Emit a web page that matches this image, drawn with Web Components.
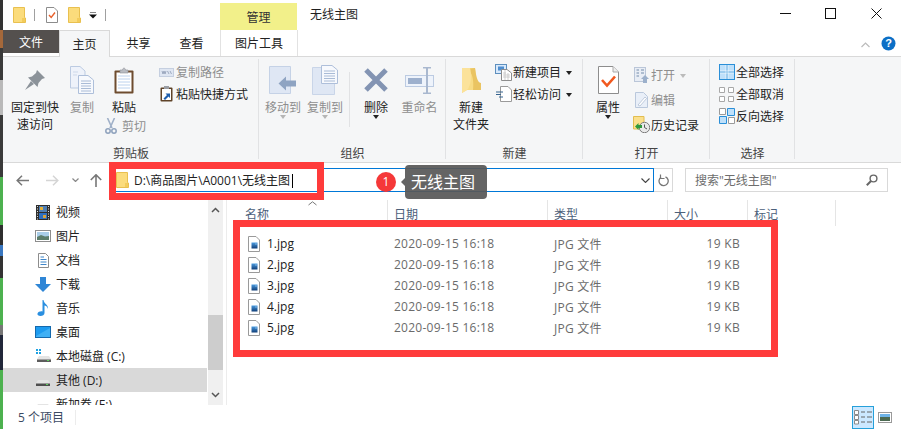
<!DOCTYPE html>
<html lang="zh">
<head>
<meta charset="utf-8">
<title>无线主图</title>
<style>
  html, body { margin: 0; height: 429px; overflow: hidden; background: #fff; }
  body { font: 12px "Open Sans", "Noto Sans CJK SC", sans-serif; color: #1f1f1f; display: flex; position: relative; }
  .strip { width: 3px; flex: none; background: linear-gradient(#333 0 30px, #a5683a 30px 48px, #3a3a3a 48px 80px, #b9b9b9 80px 115px, #3a3a3a 115px 177px, #4db14f 177px 225px, #2f2f2f 225px 245px, #3a77c0 245px 256px, #333 256px 278px, #4db14f 278px 325px, #777 325px 335px, #22283a 335px 370px, #4db14f 370px); }
  #frame1 { left: 109px; top: 162px; width: 215px; height: 38px; }
  #frame2 { left: 233px; top: 220px; width: 545px; height: 137px; }
</style>
</head>
<body>
<div class="strip"></div>
<file-window></file-window>
<red-frame id="frame1"></red-frame>
<red-frame id="frame2"></red-frame>
<step-tip step="1">无线主图</step-tip>

<script>
// all icons in one place, drawn at the size they have on screen
const ICONS = {
  folder: [13, 16, `<path d="M.5 .5H11.5V10.5L12.5 11V15.5H.5Z" fill="#fbdc7c" stroke="#e9c04f"/><path d="M9 11H12V15H9Z" fill="#f3cc5b"/>`],
  qatdoc: [12, 16, `<path d="M.5 .5H8L11.5 4V15.5H.5Z" fill="#fff" stroke="#8c8c8c"/><path d="M3 8L5.2 10.5L9 5.5" fill="none" stroke="#e8612c" stroke-width="1.4"/>`],
  qatdrop: [8, 7, `<path d="M1 0H7" stroke="#111"/><path d="M0 2.5H8L4 6.5Z" fill="#111"/>`],
  pin: [20, 20, `<path d="M12 0L20 8 17 9 13.5 13 12.5 17 3 7.5 7 6.5 11 3Z" fill="#8b9299"/><path d="M6 11L0 20 9 14Z" fill="#8b9299"/>`],
  copy: [24, 28, `<path d="M.5 .5H10L15 5V22H.5Z" fill="#eef2fa" stroke="#bccbe2"/><path d="M8.5 9.5H18L23.5 14V27.5H8.5Z" fill="#f7f9fd" stroke="#aebfda"/><path d="M11 15H21M11 17.5H21M11 20H21M11 22.5H21M11 25H21" stroke="#a9bbd6"/><path d="M3 6H8M3 9H7" stroke="#cdd8ea"/>`],
  paste: [20, 27, `<rect x=".5" y="3.5" width="19" height="23" rx="1" fill="#6e4c2f"/><rect x="2.5" y="5.5" width="15" height="19" fill="#fff"/><path d="M4 9H16M4 12H16M4 15H16M4 18H16M4 21H16" stroke="#bcd2ee"/><path d="M6 5V3H8.5C8.5 .5 11.5 .5 11.5 3H14V6H6Z" fill="#b9bcc2" stroke="#8e9198" stroke-width=".6"/>`],
  cut: [12, 16, `<path d="M2.5 0L7 10M9.5 0L5 10" stroke="#9fb0c8" stroke-width="1.6" fill="none"/><circle cx="3" cy="13" r="2.2" fill="none" stroke="#8fa2bd" stroke-width="1.5"/><circle cx="9" cy="13" r="2.2" fill="none" stroke="#8fa2bd" stroke-width="1.5"/>`],
  pathcopy: [15, 9, `<rect x=".5" y=".5" width="14" height="8" fill="#dfe6f2" stroke="#c5cfe0"/><path d="M3 3L4 6 5 3 6 6 7 3M8.5 3L10 6M11 3L12.5 6" stroke="#8d9bb2" fill="none" stroke-width=".8"/>`],
  shortcut: [13, 16, `<rect x=".5" y="1.5" width="12" height="14" rx="1" fill="#5f4328"/><rect x="2" y="3" width="9" height="11" fill="#fff"/><rect x="4" y="0" width="5" height="3" fill="#9a9da3"/><path d="M3.5 12.5L7 9 5.5 7.5H10V12L8.5 10.5 5 14Z" fill="#1f5fae"/>`],
  move: [28, 28, `<path d="M.5 .5H21.5V27.5H.5Z" fill="#dfe7f4" stroke="#c5d2e6"/><path d="M17 10.5L9.5 17.5 17 24.5V20.5H27V14.5H17Z" fill="#8fa4c2"/>`],
  copyto: [26, 30, `<path d="M.5 2.5H22.5V29.5H.5Z" fill="#dfe7f4" stroke="#c9d5e8"/><path d="M9.5 .5H20L25.5 5V18.5H9.5Z" fill="#f7f9fd" stroke="#aebfda"/><path d="M12 6H23M12 8.5H23M12 11H23M12 13.5H23M12 16H23" stroke="#a9bbd6"/>`],
  del: [26, 26, `<path d="M3 3L23 23M23 3L3 23" stroke="#8394b3" stroke-width="5"/>`],
  rename: [29, 27, `<rect x=".5" y="8.5" width="28" height="11" fill="#eef3fb" stroke="#bccbe2"/><rect x="3" y="11" width="14" height="6" fill="#9db0cd"/><path d="M18 .5H26M18 26.5H26M22 1V26" stroke="#a9b8cf" stroke-width="2" fill="none"/>`],
  newfolder: [19, 25, `<path d="M0 0H13L15 17 19 17V22H5L0 25Z" fill="#f8dc85"/><path d="M5 1C11 4 12 14 11 22H19V15C15 15 14 6 13 0Z" fill="#eac462"/><path d="M0 0H8C10 7 9 18 5 22L0 25Z" fill="#fbe29a"/>`],
  newitem: [17, 17, `<rect x=".5" y=".5" width="11" height="9" fill="#d8e9fb" stroke="#5d8fbe"/><rect x="3" y="2.5" width="6" height="4" fill="#4e8ed0"/><path d="M6.5 5.5H12L16.5 9V16.5H6.5Z" fill="#fff" stroke="#8d8d8d"/><path d="M8 9H11M8 11H15M8 13H15M10 6V16M13 9V16" stroke="#bdbdbd" stroke-width=".7"/>`],
  easy: [16, 16, `<path d="M4.5 .5H12L15.5 4V15.5H4.5Z" fill="#fff" stroke="#9a9a9a"/><path d="M0 6H7M0 8.5H5M3 11H7" stroke="#36648f" stroke-width="1.2"/>`],
  props: [21, 28, `<path d="M.5 .5H15L20.5 6V27.5H.5Z" fill="#fff" stroke="#8d8d8d"/><path d="M15 .5V6H20.5" fill="#eee" stroke="#aaa"/><path d="M4 14L9 19.5 17 10.5" fill="none" stroke="#f1591f" stroke-width="2.6"/>`],
  open: [15, 16, `<rect x=".5" y=".5" width="11" height="14" fill="#e8edf5" stroke="#bac6d8"/><path d="M2.5 3H5M2.5 6H5M2.5 9H5M7 3H10M7 6H10" stroke="#9badc4" stroke-width="1.4"/><path d="M11 8L15 12H13V16H9V12H7Z" fill="#9cb0cb"/>`],
  edit: [13, 16, `<path d="M.5 .5H8.5L12.5 4.5V15.5H.5Z" fill="#e9eff8" stroke="#bac8dc"/><path d="M3 13L10 5 11.5 6.5 5 14Z" fill="#fff" stroke="#a8b8cf" stroke-width=".7"/>`],
  history: [17, 17, `<path d="M.5 .5H11V13H.5Z" fill="#fbe08c" stroke="#e2bd50"/><circle cx="11.5" cy="11.5" r="5.2" fill="#e9e9e9" stroke="#7d7d7d"/><path d="M11.5 8.5V11.5L14 13" stroke="#555" fill="none"/><path d="M2 10.5L5.5 7V9H9V12H5.5V14Z" fill="#2f9a3c"/>`],
  selall: [16, 16, `<rect x=".5" y=".5" width="15" height="15" fill="#bfe0fa" stroke="#2a8fd8"/><path d="M8 0V16M0 8H16" stroke="#2a8fd8"/><path d="M7 1V15M9 1V15M1 7H15M1 9H15" stroke="#fff" stroke-width=".6"/>`],
  selnone: [15, 15, `<path d="M.5 .5H5.5V5.5H.5ZM9.5 .5H14.5V5.5H9.5ZM.5 9.5H5.5V14.5H.5ZM9.5 9.5H14.5V14.5H9.5Z" fill="#fff" stroke="#a8a8a8"/>`],
  selinv: [16, 16, `<path d="M.5 .5H6.5V6.5H.5ZM9.5 9.5H15.5V15.5H9.5Z" fill="#fff" stroke="#9a9a9a"/><path d="M8.5 .5H15.5V7.5H8.5ZM.5 8.5H7.5V15.5H.5Z" fill="#bfe0fa" stroke="#2a8fd8"/>`],
  help: [15, 15, `<circle cx="7.5" cy="7.5" r="7" fill="#0c6fc6"/>`],
  back: [13, 11, `<path d="M6 .8L1.2 5.5 6 10.2M1.5 5.5H13" fill="none" stroke="#777" stroke-width="1.5"/>`],
  forward: [13, 11, `<path d="M7 .8L11.8 5.5 7 10.2M11.5 5.5H0" fill="none" stroke="#d5d5d5" stroke-width="1.5"/>`],
  up: [12, 13, `<path d="M.8 6L6 .8 11.2 6M6 1V13" fill="none" stroke="#777" stroke-width="1.6"/>`],
  chev: [7, 4, `<path d="M.5 .5L3.5 3.5 6.5 .5" fill="none" stroke="#888" stroke-width="1.2"/>`],
  chevd: [9, 5, `<path d="M.5 .5L4.5 4.5 8.5 .5" fill="none" stroke="#444" stroke-width="1.1"/>`],
  refresh: [11, 13, `<path d="M7.5 2.8A4.6 4.6 0 1 1 3 3.2" fill="none" stroke="#777" stroke-width="1.3"/><path d="M2.5 .5V4.5H6.5" fill="none" stroke="#777" stroke-width="1.2"/>`],
  search: [12, 12, `<circle cx="7.5" cy="4.5" r="3.4" fill="none" stroke="#666" stroke-width="1.4"/><path d="M5 7L.8 11.2" stroke="#666" stroke-width="2"/>`],
  video: [14, 15, `<rect width="14" height="15" fill="#2e2e2e"/><path d="M1 1.5H2M1 4H2M1 6.5H2M1 9H2M1 11.5H2M1 14H2M12 1.5H13M12 4H13M12 6.5H13M12 9H13M12 11.5H13M12 14H13" stroke="#ddd"/><rect x="3" y="1" width="8" height="6" fill="#4f7fb5"/><rect x="3" y="8" width="8" height="6" fill="#2f6fc0"/><path d="M4 2H7V5H4Z" fill="#e3b23c"/><path d="M7 10H10V13H7Z" fill="#d9a23a"/>`],
  picture: [16, 12, `<rect x=".5" y=".5" width="15" height="11" fill="#fff" stroke="#8d8d8d"/><rect x="2" y="2" width="12" height="8" fill="#a9cde8"/><path d="M2 7L6 5 10 6.5 14 6V10H2Z" fill="#5c7d6a"/>`],
  doc: [11, 15, `<path d="M.5 .5H7.5L10.5 3.5V14.5H.5Z" fill="#fff" stroke="#8d8d8d"/><path d="M2.5 4H6M2.5 6.5H8.5M2.5 9H8.5M2.5 11.5H8.5" stroke="#3f86c9"/>`],
  download: [16, 15, `<path d="M5 0H11V7H16L8 15 0 7H5Z" fill="#2f86d6"/>`],
  music: [12, 16, `<path d="M6.5 0C7 4 11.5 4.5 11 9 10.5 6.5 8.5 5.5 7.5 5.5V13C7.5 15 5.5 16 3.5 16 1.5 16 0 15 .5 13.5 1 12 3.5 11 5.5 11.5V0Z" fill="#2a8fe0"/>`],
  desktop: [16, 12, `<rect x=".5" y=".5" width="15" height="11" fill="#1d9bf0" stroke="#1469ad"/><path d="M1 10L15 2V11H1Z" fill="#3fb0f5"/>`],
  cdrive: [15, 14, `<path d="M0 0H2V2H0ZM3 0H5V2H3ZM0 3H2V5H0ZM3 3H5V5H3Z" fill="#1ba1e2"/><path d="M1 10L3 7H13L15 10V13H1Z" fill="#e4e4e4"/><rect x="1" y="10.5" width="14" height="2.5" fill="#5c5c5c"/><rect x="11" y="11" width="2" height="1" fill="#5fd35f"/>`],
  drive: [14, 14, `<path d="M0 10L2 7H12L14 10V13H0Z" fill="#e4e4e4"/><rect y="10.5" width="14" height="2.5" fill="#4f4f4f"/><rect x="10" y="11" width="2" height="1" fill="#5fd35f"/>`],
  file: [12, 16, `<defs><linearGradient id="jpg" x1="0" y1="0" x2="0" y2="1"><stop offset="0" stop-color="#4a9be0"/><stop offset="1" stop-color="#103e78"/></linearGradient></defs><path d="M.5 .5H8L11.5 4V15.5H.5Z" fill="#fff" stroke="#9a9a9a"/><rect x="3.5" y="6.5" width="6" height="6" fill="url(#jpg)"/><rect x="7.5" y="7.5" width="1" height="1" fill="#cfe8fb"/>`],
  viewlist: [20, 16, `<path d="M1.5 1.5H5.5V5.5H1.5ZM1.5 6.5H5.5V10.5H1.5ZM1.5 11.5H5.5V15H1.5Z" fill="#fff" stroke="#8a8a8a"/><path d="M8 3H12M14 3H19M8 8H12M14 8H19M8 13H12M14 13H19" stroke="#666"/>`],
  viewthumb: [14, 11, `<rect x=".5" y=".5" width="13" height="10" fill="#fff" stroke="#9a9a9a"/><rect x="2" y="2" width="10" height="3" fill="#6fb4e8"/><rect x="2" y="5" width="10" height="4" fill="#4d6a52"/>`]
};

class WinIcon extends HTMLElement {
  connectedCallback() {
    const [w, h, body] = ICONS[this.getAttribute("name")];
    const shadow = this.shadowRoot || this.attachShadow({ mode: "open" });
    shadow.innerHTML = `
      <style>:host { display: inline-flex; flex: none; } svg { display: block; }</style>
      <svg width="${w}" height="${h}" viewBox="0 0 ${w} ${h}">${body}</svg>`;
  }
}

// top strip: quick access icons, contextual tab header, title, window buttons
class TitleBar extends HTMLElement {
  constructor() {
    super();
    this.attachShadow({ mode: "open" }).innerHTML = `
      <style>
        :host { display: flex; height: 30px; align-items: center; background: #fff; }
        .qat { display: flex; align-items: center; width: 217px; padding-left: 10px; box-sizing: border-box; }
        .bar { width: 1px; height: 12px; background: #a0a0a0; }
        .ctx { align-self: flex-end; width: 77px; height: 27px; background: #f2f08a; display: flex; align-items: center; justify-content: center; color: #333; }
        .title { margin-left: 13px; flex: 1; margin-top: -3px; }
        .btns { display: flex; align-items: center; padding-right: 19px; margin-top: -3px; }
        .min { width: 11px; height: 1px; background: #111; margin-right: 34px; }
        .max { width: 9px; height: 9px; border: 1px solid #111; margin-right: 35px; }
      </style>
      <div class="qat">
        <win-icon name="folder"></win-icon>
        <span class="bar" style="margin:0 11px 0 8px"></span>
        <win-icon name="qatdoc"></win-icon>
        <win-icon name="folder" style="margin-left:10px"></win-icon>
        <win-icon name="qatdrop" style="margin-left:8px"></win-icon>
        <span class="bar" style="margin-left:8px"></span>
      </div>
      <div class="ctx">管理</div>
      <div class="title">无线主图</div>
      <div class="btns">
        <span class="min"></span><span class="max"></span>
        <svg width="11" height="11" viewBox="0 0 11 11"><path d="M.5 .5L10.5 10.5M10.5 .5L.5 10.5" stroke="#111"/></svg>
      </div>`;
  }
}

class TabStrip extends HTMLElement {
  constructor() {
    super();
    this.attachShadow({ mode: "open" }).innerHTML = `
      <style>
        :host { display: flex; height: 27px; background: #fff; border-bottom: 1px solid #d9d9d9; box-sizing: border-box; position: relative; color: #222; }
        div { display: flex; align-items: center; justify-content: center; height: 26px; box-sizing: border-box; }
        .file { width: 56px; height: 23px; background: #54504e; color: #fff; }
        .on { width: 51px; height: 27px; background: #f5f6f7; border: 1px solid #d9d9d9; border-bottom: 0; }
        .plain { width: 53px; }
        .plain.a { margin-left: 2px; }
        .pic { width: 78px; margin-left: 2px; border: solid #e2e2e2; border-width: 0 1px; }
        .right { margin-left: auto; padding-right: 5px; gap: 11px; }
        .q { position: relative; width: 15px; height: 15px; }
        .q span { position: absolute; inset: 0; color: #fff; font: bold 11px/15px "Liberation Sans", sans-serif; text-align: center; }
        .up { width: 9px; height: 9px; margin-top: 4px; }
      </style>
      <div class="file">文件</div>
      <div class="on">主页</div>
      <div class="plain a">共享</div>
      <div class="plain">查看</div>
      <div class="pic">图片工具</div>
      <div class="right">
        <svg class="up" viewBox="0 0 9 9"><path d="M.5 6L4.5 2 8.5 6" fill="none" stroke="#bbb" stroke-width="1.2"/></svg>
        <div class="q" style="height:15px"><win-icon name="help"></win-icon><span>?</span></div>
      </div>`;
  }
}

class RibbonGroup extends HTMLElement {
  constructor() {
    super();
    this.attachShadow({ mode: "open" }).innerHTML = `
      <style>
        :host { display: flex; flex-direction: column; flex: none; box-sizing: border-box; position: relative; }
        :host::after { content: ""; position: absolute; right: 0; top: 2px; bottom: 3px; width: 1px; background: #e1e2e4; }
        .body { display: flex; flex: 1; padding-top: 4px; }
        .label { text-align: center; height: 17px; line-height: 17px; color: #444; }
      </style>
      <div class="body"><slot></slot></div>
      <div class="label"></div>`;
  }
  connectedCallback() {
    this.style.width = this.getAttribute("w") + "px";
    this.shadowRoot.querySelector(".label").textContent = this.getAttribute("label");
  }
}

// big ribbon button: icon on top, one or two lines of text, optional drop arrow
class RibbonLarge extends HTMLElement {
  constructor() {
    super();
    this.attachShadow({ mode: "open" }).innerHTML = `
      <style>
        :host { display: flex; flex-direction: column; align-items: center; flex: none; }
        :host([off]) { color: #8e8e8e; }
        .pic { height: 38px; display: flex; align-items: center; justify-content: center; }
        .txt { line-height: 17px; text-align: center; white-space: nowrap; }
        .arrow { width: 0; height: 0; border: 3px solid transparent; border-top: 4px solid #222; border-bottom: 0; margin-top: -1px; }
        :host([off]) .arrow { border-top-color: #b5b5b5; }
      </style>
      <div class="pic"><slot name="icon"></slot></div>
      <div class="txt"><slot></slot></div>`;
  }
  connectedCallback() {
    this.style.width = this.getAttribute("w") + "px";
    if (this.hasAttribute("drop")) {
      const a = document.createElement("div");
      a.className = "arrow";
      this.shadowRoot.append(a);
    }
  }
}

class RibbonSmall extends HTMLElement {
  constructor() {
    super();
    this.attachShadow({ mode: "open" }).innerHTML = `
      <style>
        :host { display: flex; align-items: center; height: 22px; white-space: nowrap; }
        :host([off]) { color: #8e8e8e; }
        .pic { width: 19px; flex: none; display: flex; justify-content: center; }
        .arrow { width: 0; height: 0; border: 3px solid transparent; border-top: 4px solid #222; border-bottom: 0; margin-left: 5px; margin-top: 1px; }
        :host([off]) .arrow { border-top-color: #bbb; }
      </style>
      <div class="pic"><slot name="icon"></slot></div>
      <slot></slot>`;
  }
  connectedCallback() {
    if (this.hasAttribute("drop")) {
      const a = document.createElement("div");
      a.className = "arrow";
      this.shadowRoot.append(a);
    }
  }
}

class RibbonBar extends HTMLElement {
  constructor() {
    super();
    this.attachShadow({ mode: "open" }).innerHTML = `
      <style>
        :host { display: flex; height: 106px; background: #f5f6f7; border-bottom: 1px solid #d9d9d9; box-sizing: border-box; color: #222; }
        .stack { display: flex; flex-direction: column; flex: none; }
        .vsep { width: 1px; height: 55px; background: #e1e2e4; margin: 11px 8px 0 3px; flex: none; }
      </style>
      <ribbon-group label="剪贴板" w="256">
        <ribbon-large w="54" style="margin-left:5px"><win-icon slot="icon" name="pin"></win-icon>固定到快<br>速访问</ribbon-large>
        <ribbon-large w="40" off><win-icon slot="icon" name="copy"></win-icon>复制</ribbon-large>
        <div class="stack" style="width:55px">
          <ribbon-large w="44"><win-icon slot="icon" name="paste"></win-icon>粘贴</ribbon-large>
          <ribbon-small off style="margin-left:-1px;height:20px"><win-icon slot="icon" name="cut"></win-icon><span style="margin-left:2px;margin-top:-1px">剪切</span></ribbon-small>
        </div>
        <div class="stack">
          <ribbon-small off><win-icon slot="icon" name="pathcopy"></win-icon>复制路径</ribbon-small>
          <ribbon-small><win-icon slot="icon" name="shortcut"></win-icon>粘贴快捷方式</ribbon-small>
        </div>
      </ribbon-group>
      <ribbon-group label="组织" w="187">
        <ribbon-large w="42" drop off style="margin-left:3px"><win-icon slot="icon" name="move"></win-icon>移动到</ribbon-large>
        <ribbon-large w="42" drop off><win-icon slot="icon" name="copyto"></win-icon>复制到</ribbon-large>
        <span class="vsep"></span>
        <ribbon-large w="34" drop style="margin-left:1px"><win-icon slot="icon" name="del"></win-icon>删除</ribbon-large>
        <ribbon-large w="47" off style="margin-left:3px"><win-icon slot="icon" name="rename"></win-icon>重命名</ribbon-large>
      </ribbon-group>
      <ribbon-group label="新建" w="137">
        <ribbon-large w="44" style="margin-left:3px"><win-icon slot="icon" name="newfolder"></win-icon>新建<br>文件夹</ribbon-large>
        <div class="stack" style="margin-left:1px">
          <ribbon-small drop><win-icon slot="icon" name="newitem"></win-icon>新建项目</ribbon-small>
          <ribbon-small drop><win-icon slot="icon" name="easy"></win-icon>轻松访问</ribbon-small>
        </div>
      </ribbon-group>
      <ribbon-group label="打开" w="127">
        <ribbon-large w="36" drop style="margin-left:7px"><win-icon slot="icon" name="props"></win-icon>属性</ribbon-large>
        <div class="stack" style="margin-left:6px;padding-top:2px">
          <ribbon-small off drop style="height:24px"><win-icon slot="icon" name="open"></win-icon>打开</ribbon-small>
          <ribbon-small off style="height:25px"><win-icon slot="icon" name="edit"></win-icon>编辑</ribbon-small>
          <ribbon-small style="height:25px"><win-icon slot="icon" name="history"></win-icon>历史记录</ribbon-small>
        </div>
      </ribbon-group>
      <ribbon-group label="选择" w="85">
        <div class="stack" style="margin-left:7px">
          <ribbon-small><win-icon slot="icon" name="selall"></win-icon>全部选择</ribbon-small>
          <ribbon-small><win-icon slot="icon" name="selnone"></win-icon>全部取消</ribbon-small>
          <ribbon-small><win-icon slot="icon" name="selinv"></win-icon>反向选择</ribbon-small>
        </div>
      </ribbon-group>`;
  }
}

class NavBar extends HTMLElement {
  constructor() {
    super();
    this.attachShadow({ mode: "open" }).innerHTML = `
      <style>
        :host { display: flex; align-items: center; height: 37px; background: #fff; padding-bottom: 3px; box-sizing: border-box; }
        .arrows { display: flex; align-items: center; width: 107px; padding-left: 13px; box-sizing: border-box; flex: none; }
        .addr { display: flex; align-items: center; width: 544px; height: 24px; box-sizing: border-box; border: 1px solid #0078d7; padding: 0 3px 0 5px; flex: none; color: #222; }
        .path { margin-left: 5px; flex: 1; }
        .caret { display: inline-block; width: 1px; height: 14px; background: #000; vertical-align: -3px; margin-left: 2px; }
        .ref { display: flex; align-items: center; justify-content: center; width: 19px; height: 24px; box-sizing: border-box; border: 1px solid #d9d9d9; border-left: 0; flex: none; }
        .find { display: flex; align-items: center; justify-content: space-between; width: 203px; height: 24px; margin-left: 12px; box-sizing: border-box; border: 1px solid #d9d9d9; padding: 0 9px 0 9px; color: #6d6d6d; flex: none; }
      </style>
      <div class="arrows">
        <win-icon name="back"></win-icon>
        <win-icon name="forward" style="margin-left:17px"></win-icon>
        <win-icon name="chev" style="margin-left:13px"></win-icon>
        <win-icon name="up" style="margin-left:11px"></win-icon>
      </div>
      <div class="addr">
        <win-icon name="folder"></win-icon>
        <span class="path">D:\\商品图片\\A0001\\无线主图<span class="caret"></span></span>
        <win-icon name="chevd"></win-icon>
      </div>
      <div class="ref"><win-icon name="refresh"></win-icon></div>
      <div class="find"><span>搜索"无线主图"</span><win-icon name="search"></win-icon></div>`;
  }
}

class NavItem extends HTMLElement {
  constructor() {
    super();
    this.attachShadow({ mode: "open" }).innerHTML = `
      <style>
        :host { display: flex; align-items: center; height: 24px; flex: none; color: #222; white-space: nowrap; }
        :host([on]) { background: #d9d9d9; }
        .pic { display: flex; justify-content: center; padding-left: 32px; width: 16px; margin-right: 5px; }
      </style>
      <div class="pic"></div>
      <slot></slot>`;
  }
  connectedCallback() {
    // the icon name is only readable here, so the icon is added here too
    const icon = document.createElement("win-icon");
    icon.setAttribute("name", this.getAttribute("icon"));
    this.shadowRoot.querySelector(".pic").append(icon);
  }
}

class NavPane extends HTMLElement {
  constructor() {
    super();
    this.attachShadow({ mode: "open" }).innerHTML = `
      <style>
        :host { display: flex; width: 223px; flex: none; overflow: hidden; }
        .items { display: flex; flex-direction: column; width: 204px; flex: none; overflow: hidden; }
        .scroll { display: flex; flex-direction: column; align-items: center; width: 15px; margin-left: 1px; background: #f0f0f0; flex: none; }
        .scroll svg { margin: 7px 0; flex: none; }
        .thumb { width: 100%; height: 55px; background: #cdcdcd; margin-top: 95px; margin-bottom: auto; flex: none; }
      </style>
      <div class="items"><slot></slot></div>
      <div class="scroll">
        <svg width="9" height="6" viewBox="0 0 9 6"><path d="M1 5L4.5 1.5 8 5" fill="none" stroke="#555" stroke-width="1.5"/></svg>
        <div class="thumb"></div>
        <svg width="9" height="6" viewBox="0 0 9 6"><path d="M1 1L4.5 4.5 8 1" fill="none" stroke="#555" stroke-width="1.5"/></svg>
      </div>`;
  }
}

class FileRow extends HTMLElement {
  constructor() {
    super();
    this.attachShadow({ mode: "open" }).innerHTML = `
      <style>
        :host { display: grid; grid-template-columns: 150px 160px 120px 80px; height: 21px; align-items: center; margin-left: 11px; white-space: nowrap; color: #6b6b6b; }
        .name { display: flex; align-items: center; gap: 7px; padding-left: 10px; color: #222; }
        .date, .type { padding-left: 6px; letter-spacing: .25px; }
        .size { text-align: right; padding-right: 8px; letter-spacing: .3px; }
      </style>
      <div class="name"><win-icon name="file"></win-icon><span class="n"></span></div>
      <div class="date"></div><div class="type"></div><div class="size"></div>`;
  }
  connectedCallback() {
    for (const k of ["date", "type", "size"]) this.shadowRoot.querySelector("." + k).textContent = this.getAttribute(k);
    this.shadowRoot.querySelector(".n").textContent = this.getAttribute("name");
  }
}

class FileList extends HTMLElement {
  constructor() {
    super();
    this.attachShadow({ mode: "open" }).innerHTML = `
      <style>
        :host { display: block; flex: 1; border-left: 1px solid #ececec; position: relative; }
        .head { display: grid; grid-template-columns: 150px 160px 120px 80px 88px; height: 26px; margin: 0 0 7px 11px; color: #4c607a; }
        .head div { padding: 5px 0 0 6px; border-right: 1px solid #e5e5e5; box-sizing: border-box; }
        .head div:first-child { padding-left: 7px; }
        .sort { position: absolute; left: 81px; top: 1px; }
      </style>
      <div class="head"><div>名称</div><div>日期</div><div>类型</div><div>大小</div><div>标记</div></div>
      <svg class="sort" width="9" height="5" viewBox="0 0 9 5"><path d="M.5 4L4.5 .8 8.5 4" fill="none" stroke="#777"/></svg>
      <slot></slot>`;
  }
}

class StatusBar extends HTMLElement {
  constructor() {
    super();
    this.attachShadow({ mode: "open" }).innerHTML = `
      <style>
        :host { display: flex; align-items: center; height: 24px; background: #fff; color: #3b4a63; padding-left: 15px; }
        .count { width: 57px; height: 15px; line-height: 15px; border-right: 1px solid #ececec; }
        .views { margin-left: auto; display: flex; align-items: center; padding-right: 9px; }
        .cur { display: flex; align-items: center; justify-content: center; width: 22px; height: 23px; box-sizing: border-box; background: #cce8ff; border: 1px solid #26a0da; margin-right: 4px; }
      </style>
      <div class="count">5 个项目</div>
      <div class="views">
        <div class="cur"><win-icon name="viewlist"></win-icon></div>
        <win-icon name="viewthumb"></win-icon>
      </div>`;
  }
}

class FileWindow extends HTMLElement {
  constructor() {
    super();
    this.attachShadow({ mode: "open" }).innerHTML = `
      <style>
        :host { display: flex; flex-direction: column; flex: 1; height: 429px; min-width: 0; }
        main { display: flex; height: 205px; overflow: hidden; flex: none; }
      </style>
      <title-bar></title-bar>
      <tab-strip></tab-strip>
      <ribbon-bar></ribbon-bar>
      <nav-bar></nav-bar>
      <main>
        <nav-pane>
          <nav-item icon="video">视频</nav-item>
          <nav-item icon="picture">图片</nav-item>
          <nav-item icon="doc">文档</nav-item>
          <nav-item icon="download">下载</nav-item>
          <nav-item icon="music">音乐</nav-item>
          <nav-item icon="desktop">桌面</nav-item>
          <nav-item icon="cdrive">本地磁盘 (C:)</nav-item>
          <nav-item icon="drive" on>其他 (D:)</nav-item>
          <nav-item icon="drive">新加卷 (E:)</nav-item>
        </nav-pane>
        <file-list>
          <file-row name="1.jpg" date="2020-09-15 16:18" type="JPG 文件" size="19 KB"></file-row>
          <file-row name="2.jpg" date="2020-09-15 16:18" type="JPG 文件" size="19 KB"></file-row>
          <file-row name="3.jpg" date="2020-09-15 16:18" type="JPG 文件" size="19 KB"></file-row>
          <file-row name="4.jpg" date="2020-09-15 16:18" type="JPG 文件" size="19 KB"></file-row>
          <file-row name="5.jpg" date="2020-09-15 16:18" type="JPG 文件" size="19 KB"></file-row>
        </file-list>
      </main>
      <status-bar></status-bar>`;
  }
}

// annotation drawn over the screenshot
class RedFrame extends HTMLElement {
  constructor() {
    super();
    this.attachShadow({ mode: "open" }).innerHTML = `
      <style>:host { position: absolute; box-sizing: border-box; border: 7px solid #ff3b3b; pointer-events: none; }</style>`;
  }
}

class StepTip extends HTMLElement {
  constructor() {
    super();
    this.attachShadow({ mode: "open" }).innerHTML = `
      <style>
        :host { position: absolute; left: 376px; top: 165px; height: 34px; display: flex; align-items: center; }
        .dot { width: 20px; height: 20px; border-radius: 50%; background: #f53838; color: #fff; font: 12px/20px "Open Sans", sans-serif; text-align: center; }
        .box { position: relative; margin-left: 9px; height: 34px; padding: 0 12px 0 6px; border-radius: 4px; background: rgba(88, 88, 88, .93); color: #fff; font-size: 16px; line-height: 34px; }
        .box::before { content: ""; position: absolute; left: -4px; top: 13px; border: 4px solid transparent; border-right-color: rgba(88, 88, 88, .93); border-left: 0; }
      </style>
      <div class="dot"></div>
      <div class="box"><slot></slot></div>`;
  }
  connectedCallback() {
    this.shadowRoot.querySelector(".dot").textContent = this.getAttribute("step");
  }
}

customElements.define("win-icon", WinIcon);
customElements.define("title-bar", TitleBar);
customElements.define("tab-strip", TabStrip);
customElements.define("ribbon-group", RibbonGroup);
customElements.define("ribbon-large", RibbonLarge);
customElements.define("ribbon-small", RibbonSmall);
customElements.define("ribbon-bar", RibbonBar);
customElements.define("nav-bar", NavBar);
customElements.define("nav-item", NavItem);
customElements.define("nav-pane", NavPane);
customElements.define("file-row", FileRow);
customElements.define("file-list", FileList);
customElements.define("status-bar", StatusBar);
customElements.define("file-window", FileWindow);
customElements.define("red-frame", RedFrame);
customElements.define("step-tip", StepTip);
</script>
</body>
</html>
